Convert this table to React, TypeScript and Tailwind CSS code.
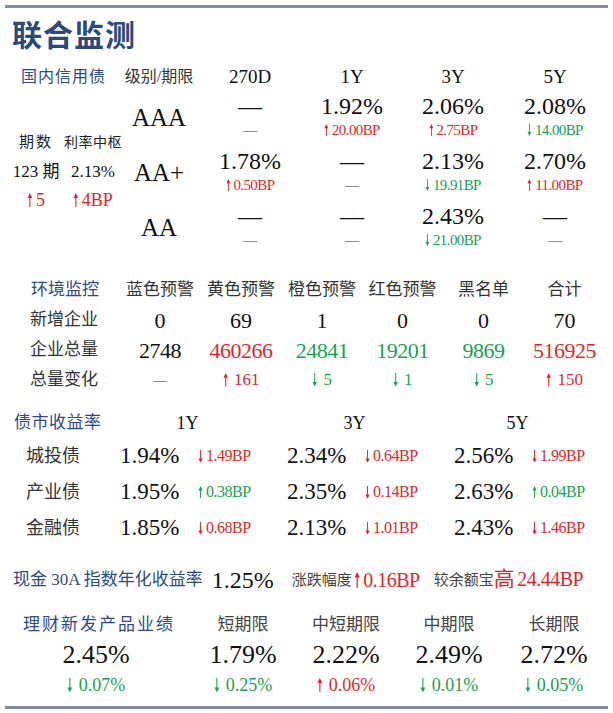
import React from "react";

const red = "text-[#e81f27]";
const green = "text-[#16a352]";
const blue = "text-[#2c4a86]";

type Cell = { v?: string; d?: string; up?: boolean; tone?: string };

const credit: { grade: string; cells: Cell[] }[] = [
  {
    grade: "AAA",
    cells: [
      {},
      { v: "1.92%", d: "20.00BP", up: true, tone: red },
      { v: "2.06%", d: "2.75BP", up: true, tone: red },
      { v: "2.08%", d: "14.00BP", up: false, tone: green },
    ],
  },
  {
    grade: "AA+",
    cells: [
      { v: "1.78%", d: "0.50BP", up: true, tone: red },
      {},
      { v: "2.13%", d: "19.91BP", up: false, tone: green },
      { v: "2.70%", d: "11.00BP", up: true, tone: red },
    ],
  },
  {
    grade: "AA",
    cells: [{}, {}, { v: "2.43%", d: "21.00BP", up: false, tone: green }, {}],
  },
];

const envHead = ["蓝色预警", "黄色预警", "橙色预警", "红色预警", "黑名单", "合计"];
const envNew = ["0", "69", "1", "0", "0", "70"];
const envTotal = [
  { v: "2748", tone: "text-[#111]" },
  { v: "460266", tone: red },
  { v: "24841", tone: green },
  { v: "19201", tone: green },
  { v: "9869", tone: green },
  { v: "516925", tone: red },
];
const envChange: Cell[] = [
  {},
  { d: "161", up: true, tone: red },
  { d: "5", up: false, tone: green },
  { d: "1", up: false, tone: green },
  { d: "5", up: false, tone: green },
  { d: "150", up: true, tone: red },
];

const bonds: { name: string; cells: Cell[] }[] = [
  {
    name: "城投债",
    cells: [
      { v: "1.94%", d: "1.49BP", up: false, tone: red },
      { v: "2.34%", d: "0.64BP", up: false, tone: red },
      { v: "2.56%", d: "1.99BP", up: false, tone: red },
    ],
  },
  {
    name: "产业债",
    cells: [
      { v: "1.95%", d: "0.38BP", up: true, tone: green },
      { v: "2.35%", d: "0.14BP", up: false, tone: red },
      { v: "2.63%", d: "0.04BP", up: true, tone: green },
    ],
  },
  {
    name: "金融债",
    cells: [
      { v: "1.85%", d: "0.68BP", up: false, tone: red },
      { v: "2.13%", d: "1.01BP", up: false, tone: red },
      { v: "2.43%", d: "1.46BP", up: false, tone: red },
    ],
  },
];

const wealth: { head: string; v: string; d: string; up: boolean; tone: string }[] = [
  { head: "", v: "2.45%", d: "0.07%", up: false, tone: green },
  { head: "短期限", v: "1.79%", d: "0.25%", up: false, tone: green },
  { head: "中短期限", v: "2.22%", d: "0.06%", up: true, tone: red },
  { head: "中期限", v: "2.49%", d: "0.01%", up: false, tone: green },
  { head: "长期限", v: "2.72%", d: "0.05%", up: false, tone: green },
];

// thin arrow like the slide's ↑ / ↓ glyph
const Arrow = ({ up, gap = "mr-[2px]" }: { up?: boolean; gap?: string }) => (
  <svg
    viewBox="0 0 6 16"
    className={`inline-block h-[0.8em] w-[0.32em] align-[-0.05em] ${gap}`}
    fill="currentColor"
  >
    {up ? (
      <>
        <rect x="2.4" y="4" width="1.2" height="12" />
        <path d="M0.4 5.5 L3 0 L5.6 5.5 Z" />
      </>
    ) : (
      <>
        <rect x="2.4" y="0" width="1.2" height="12" />
        <path d="M0.4 10.5 L3 16 L5.6 10.5 Z" />
      </>
    )}
  </svg>
);

export default function App() {
  return (
    <div className="w-[613px] h-[713px] overflow-hidden bg-white text-[#111] font-['Liberation_Serif','Noto_Sans_CJK_SC',serif]">
      {/* top rule */}
      <div className="pt-[5px] px-[5px]">
        <div className="h-[3px] bg-[#7d8ba6]" />
      </div>

      <h1 className="mt-[7px] pl-[12px] text-[30px] leading-[36px] font-bold text-[#2b4a7c] font-['Noto_Sans_CJK_SC',sans-serif] tracking-[1px]">
        联合监测
      </h1>

      {/* 国内信用债 */}
      <div className="mt-[11px] flex">
        <div className="w-[118px] flex flex-col">
          <div className={`h-[30px] flex items-center pl-[21px] text-[16px] tracking-[1px] ${blue}`}>
            国内信用债
          </div>
          <div className="flex-1 flex flex-col justify-center pb-[6px] pl-[8px]">
            <div className="grid grid-cols-[56px_58px] text-center leading-[29px] whitespace-nowrap">
              <div className="text-[15px] tracking-[2px] text-[#222]">期数</div>
              <div className="text-[14px] tracking-[0.5px] text-[#222]">利率中枢</div>
              <div className="text-[17px]">123 期</div>
              <div className="text-[17px]">2.13%</div>
              <div className={`text-[18px] ${red}`}>
                <Arrow up gap="mr-[3px]" />5
              </div>
              <div className={`text-[18px] ${red}`}>
                <Arrow up gap="mr-[3px]" />4BP
              </div>
            </div>
          </div>
        </div>
        <div className="grid grid-cols-[82px_100px_104px_98px_106px] text-center">
          <div className="h-[30px] flex items-center justify-center text-[16px] text-[#333]">级别/期限</div>
          {["270D", "1Y", "3Y", "5Y"].map((h) => (
            <div key={h} className="h-[30px] flex items-center justify-center text-[19px]">
              {h}
            </div>
          ))}
          {credit.map((row) => (
            <React.Fragment key={row.grade}>
              <div className="h-[55px] pt-[12px] text-[25px] leading-[28px]">{row.grade}</div>
              {row.cells.map((c, i) => (
                <div key={i} className="h-[55px] flex flex-col">
                  <div className="h-[28px] leading-[28px] text-[24px]">{c.v ?? "—"}</div>
                  <div className={`h-[20px] leading-[20px] text-[15px] tracking-[-0.6px] ${c.tone ?? "text-[#333]"}`}>
                    {c.d ? (
                      <>
                        <Arrow up={c.up} gap="mr-[3px]" />
                        {c.d}
                      </>
                    ) : (
                      <span className="text-[14px]">—</span>
                    )}
                  </div>
                </div>
              ))}
            </React.Fragment>
          ))}
        </div>
      </div>

      {/* 环境监控 */}
      <div className="mt-[18px] grid grid-cols-[120px_80px_82px_80px_81px_81px_81px] text-center">
        <div className={`h-[30px] flex items-center pl-[31px] text-[17px] ${blue}`}>环境监控</div>
        {envHead.map((h) => (
          <div key={h} className="h-[30px] flex items-center justify-center text-[17px] text-[#333]">
            {h}
          </div>
        ))}
        <div className="h-[30px] flex items-center pl-[30px] text-[17px] text-[#333]">新增企业</div>
        {envNew.map((v, i) => (
          <div key={i} className="h-[30px] flex items-center justify-center text-[22px]">
            {v}
          </div>
        ))}
        <div className="h-[30px] flex items-center pl-[30px] text-[17px] text-[#333]">企业总量</div>
        {envTotal.map((c, i) => (
          <div key={i} className={`h-[30px] flex items-center justify-center text-[22px] tracking-[-0.5px] ${c.tone}`}>
            {c.v}
          </div>
        ))}
        <div className="h-[30px] flex items-center pl-[30px] text-[17px] text-[#333]">总量变化</div>
        {envChange.map((c, i) => (
          <div key={i} className={`h-[30px] flex items-center justify-center text-[17px] ${c.tone ?? "text-[#333]"}`}>
            {c.d ? (
              <>
                <Arrow up={c.up} gap="mr-[6px]" />
                {c.d}
              </>
            ) : (
              <span className="text-[14px]">—</span>
            )}
          </div>
        ))}
      </div>

      {/* 债市收益率 */}
      <div className="mt-[13px] grid grid-cols-[118px_80px_87px_80px_87px_80px_79px]">
        <div className={`h-[30px] flex items-center pl-[14px] text-[17px] tracking-[0.5px] ${blue}`}>债市收益率</div>
        {["1Y", "3Y", "5Y"].map((h) => (
          <div key={h} className="col-span-2 h-[30px] flex items-center justify-center pr-[28px] text-[18px]">
            {h}
          </div>
        ))}
        {bonds.map((row) => (
          <React.Fragment key={row.name}>
            <div className="h-[36px] flex items-center pl-[26px] text-[18px] text-[#333]">{row.name}</div>
            {row.cells.map((c, i) => (
              <React.Fragment key={i}>
                <div className="h-[36px] flex items-center pl-[2px] text-[23px]">{c.v}</div>
                <div className={`h-[36px] flex items-center text-[16px] tracking-[-0.5px] ${c.tone}`}>
                  <Arrow up={c.up} gap="mr-[3px]" />
                  {c.d}
                </div>
              </React.Fragment>
            ))}
          </React.Fragment>
        ))}
      </div>

      {/* 现金30A */}
      <div className="mt-[19px] h-[30px] flex items-center pl-[13px] whitespace-nowrap">
        <span className={`text-[17px] ${blue}`}>现金 30A 指数年化收益率</span>
        <span className="ml-[9px] text-[24px]">1.25%</span>
        <span className="ml-[18px] text-[15px] text-[#444]">涨跌幅度</span>
        <span className={`ml-[2px] text-[20px] tracking-[-0.5px] ${red}`}>
          <Arrow up gap="mr-[3px]" />
          0.16BP
        </span>
        <span className="ml-[14px] text-[15px] text-[#444]">较余额宝</span>
        <span className={`text-[20px] tracking-[-0.5px] ${red}`}>
          <span className="text-[21px] mr-[3px]">高</span>24.44BP
        </span>
      </div>

      {/* 理财新发产品业绩 */}
      <div className="mt-[15px] grid grid-cols-[192px_102px_104px_102px_108px] text-center">
        <div className={`h-[30px] flex items-center pl-[23px] text-[17px] tracking-[2px] ${blue}`}>理财新发产品业绩</div>
        {wealth.slice(1).map((w) => (
          <div key={w.head} className="h-[30px] flex items-center justify-center text-[17px] text-[#444]">
            {w.head}
          </div>
        ))}
        {wealth.map((w) => (
          <div key={w.v} className="h-[28px] flex items-center justify-center text-[26px]">
            {w.v}
          </div>
        ))}
        {wealth.map((w) => (
          <div key={w.d} className={`mt-[4px] h-[26px] flex items-center justify-center text-[18px] ${w.tone}`}>
            <Arrow up={w.up} gap="mr-[6px]" />
            {w.d}
          </div>
        ))}
      </div>

      {/* bottom rule */}
      <div className="mt-[8px] px-[5px]">
        <div className="h-[3px] bg-[#7d8ba6]" />
      </div>
    </div>
  );
}
